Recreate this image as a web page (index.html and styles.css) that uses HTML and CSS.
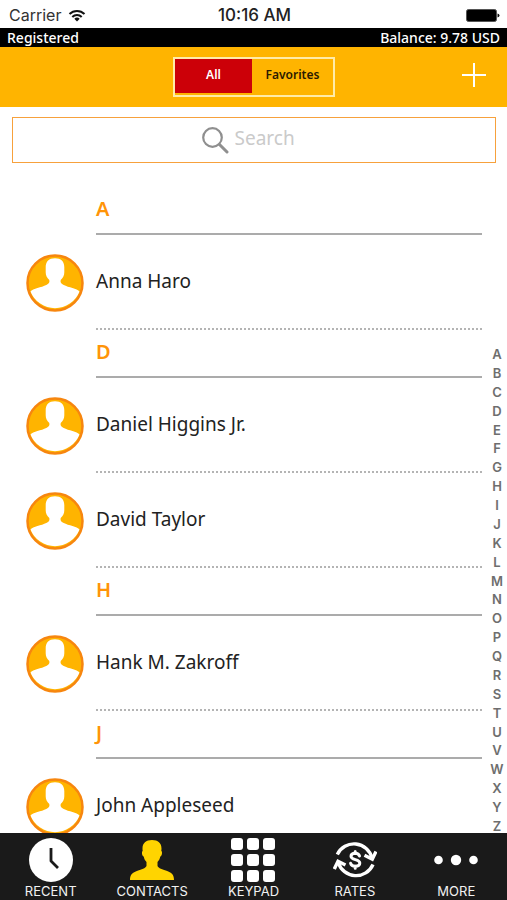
FILE: index.html
```html
<!DOCTYPE html>
<html lang="en">
<head>
<meta charset="utf-8">
<meta name="viewport" content="width=device-width, initial-scale=1">
<title>Contacts</title>
<link rel="stylesheet" href="styles.css">
</head>
<body>
<svg class="sprite" aria-hidden="true">
  <symbol id="avatar" viewBox="0 0 58 58">
    <circle cx="29" cy="29" r="28" fill="#ffb400"/>
    <path fill="#fff" d="M29 4.300c-6 0-9.300 3.200-9.300 9v5c0 3.500 1.200 5.500 3.600 7.700.6 2.500-.5 3.800-3 5C15.500 33.500 7 34.500 4.400 37.500A26.500 26.500 0 0 0 53.600 37.500C51 34.500 42.500 33.500 37.700 31c-2.500-1.200-3.600-2.500-3-5 2.400-2.200 3.600-4.200 3.600-7.700v-5c0-5.800-3.300-9-9.300-9z"/>
    <circle cx="29" cy="29" r="27.500" fill="none" stroke="#f7860f" stroke-width="2.500"/>
  </symbol>
</svg>

<div class="status">
  <span class="carrier">Carrier
    <svg class="wifi" viewBox="0 0 18 13" aria-hidden="true"><g fill="none" stroke="#111" stroke-width="2"><path d="M1.500 5a10.600 10.600 0 0 1 15 0"/><path d="M4.300 8a6.600 6.600 0 0 1 9.400 0"/></g><path fill="#111" d="M9 12.500l-2.700-2.700a3.800 3.800 0 0 1 5.400 0z"/></svg>
  </span>
  <span class="time">10:16 AM</span>
  <svg class="battery" viewBox="0 0 34 13" aria-hidden="true"><rect x=".5" y=".5" width="30" height="12" rx="2" fill="#000" stroke="#555"/><path d="M31.500 4.500q2 .5 2 2t-2 2z" fill="#111"/></svg>
</div>
<div class="account"><span>Registered</span><span>Balance: 9.78 USD</span></div>

<header class="toolbar">
  <div class="segments">
    <button class="segment active" type="button" aria-pressed="true">All</button>
    <button class="segment" type="button" aria-pressed="false">Favorites</button>
  </div>
  <button class="add" type="button" aria-label="Add contact">
    <svg viewBox="0 0 24 24" aria-hidden="true"><path d="M12 0v24M0 12h24" stroke="#fff" stroke-width="2"/></svg>
  </button>
</header>

<form class="search">
  <label for="query" aria-label="Search">
    <svg viewBox="0 0 27 27" aria-hidden="true"><g fill="none" stroke="#8f8f8f"><circle cx="10.500" cy="10.500" r="9.300" stroke-width="2.200"/><path d="M17.500 17.500l7.500 7.500" stroke-width="3" stroke-linecap="round"/></g></svg>
  </label>
  <input id="query" type="text" placeholder="Search">
</form>

<main class="contacts">
  <div class="list">
    <h2>A</h2>
    <div class="row"><svg class="avatar"><use href="#avatar"/></svg><span class="name">Anna Haro</span></div>
    <h2>D</h2>
    <div class="row"><svg class="avatar"><use href="#avatar"/></svg><span class="name">Daniel Higgins Jr.</span></div>
    <div class="row"><svg class="avatar"><use href="#avatar"/></svg><span class="name">David Taylor</span></div>
    <h2>H</h2>
    <div class="row"><svg class="avatar"><use href="#avatar"/></svg><span class="name">Hank M. Zakroff</span></div>
    <h2>J</h2>
    <div class="row"><svg class="avatar"><use href="#avatar"/></svg><span class="name">John Appleseed</span></div>
  </div>
  <div class="index">
    <span>A</span><span>B</span><span>C</span><span>D</span><span>E</span><span>F</span><span>G</span><span>H</span><span>I</span><span>J</span><span>K</span><span>L</span><span>M</span><span>N</span><span>O</span><span>P</span><span>Q</span><span>R</span><span>S</span><span>T</span><span>U</span><span>V</span><span>W</span><span>X</span><span>Y</span><span>Z</span>
  </div>
</main>

<nav class="tabs">
  <button class="tab" type="button">
    <svg viewBox="0 0 44 44" aria-hidden="true"><circle cx="22" cy="22" r="22" fill="#fff"/><path d="M22 10v13l7 7" fill="none" stroke="#1a1a1a" stroke-width="2.800" stroke-linejoin="round"/></svg>
    <span>RECENT</span>
  </button>
  <button class="tab" type="button">
    <svg viewBox="0 0 44 44" aria-hidden="true"><path fill="#ffd400" d="M22 2c-6 0-9.500 3-9.500 8.500 0 1.500.2 2.500.2 2.500-1.300.5-.8 5 1 5.500.6 2.500 1.300 4 2.800 5.500v4c-1 2.500-5 3.500-9 4.800C2.500 34.500 0 36.500 0 42h44c0-5.500-2.500-7.500-7.500-9.200-4-1.300-8-2.300-9-4.800v-4c1.500-1.500 2.200-3 2.800-5.500 1.800-.5 2.300-5 1-5.500 0 0 .2-1 .2-2.500C31.500 5 28 2 22 2z"/></svg>
    <span>CONTACTS</span>
  </button>
  <button class="tab" type="button">
    <svg viewBox="0 0 44 44" aria-hidden="true"><g fill="#fff"><rect width="12" height="12" rx="3"/><rect x="16" width="12" height="12" rx="3"/><rect x="32" width="12" height="12" rx="3"/><rect y="16" width="12" height="12" rx="3"/><rect x="16" y="16" width="12" height="12" rx="3"/><rect x="32" y="16" width="12" height="12" rx="3"/><rect y="32" width="12" height="12" rx="3"/><rect x="16" y="32" width="12" height="12" rx="3"/><rect x="32" y="32" width="12" height="12" rx="3"/></g></svg>
    <span>KEYPAD</span>
  </button>
  <button class="tab" type="button">
    <svg viewBox="0 0 44 44" aria-hidden="true"><g fill="none" stroke="#fff" stroke-width="3.400"><path d="M4.300 16.500A18.500 18.500 0 0 1 39 20"/><path d="M40 26.500A18.500 18.500 0 0 1 5.300 24.500"/><path d="M31.500 17.300l7.800 4 3.700-7.800"/><path d="M12.500 27L5 23.300 1.300 31"/><g stroke-linecap="round"><path d="M26.500 18c-.5-1.800-2.100-2.800-4.300-2.800-2.700 0-4.200 1.300-4.200 3.100 0 4.400 8.800 2.200 8.800 6.700 0 2-1.700 3.200-4.500 3.200-2.500 0-4.200-1-4.700-2.900M22.200 13.500v2M22.200 28v2.200" stroke-width="3"/></g></g></svg>
    <span>RATES</span>
  </button>
  <button class="tab" type="button">
    <svg viewBox="0 0 44 44" aria-hidden="true"><g fill="#fff"><circle cx="4.500" cy="22" r="4.300"/><circle cx="22" cy="22" r="5.200"/><circle cx="39.500" cy="22" r="4.300"/></g></svg>
    <span>MORE</span>
  </button>
</nav>
</body>
</html>
```
FILE: styles.css
```css
* { box-sizing: border-box; }

body {
  margin: 0;
  height: 100vh;
  display: flex;
  flex-direction: column;
  overflow: hidden;
  background: #fff;
  color: #222;
  font-family: "Noto Sans", "Open Sans", sans-serif;
}

button {
  margin: 0;
  padding: 0;
  border: 0;
  background: none;
  color: inherit;
  font: inherit;
}

.sprite { display: none; }

.status {
  flex: none;
  display: grid;
  grid-template-columns: 1fr auto 1fr;
  align-items: center;
  height: 28px;
  padding: 2px 7px 0 9px;
  font: 16px Inter, sans-serif;
}
.carrier { display: flex; align-items: center; gap: 7px; color: #333; }
.wifi { width: 18px; height: 13px; }
.time { font-size: 17px; font-weight: 500; }
.battery { width: 34px; height: 13px; justify-self: end; }

.account {
  flex: none;
  display: flex;
  justify-content: space-between;
  padding: 0 7px;
  background: #000;
  color: #fff;
  font-size: 14px;
  font-weight: 500;
  line-height: 19px;
}

.toolbar {
  flex: none;
  display: grid;
  grid-template-columns: 1fr 162px 1fr;
  align-items: center;
  height: 60px;
  padding: 0 21px 0 22px;
  background: #ffb400;
}
.segments {
  grid-column: 2;
  display: flex;
  height: 40px;
  padding-bottom: 2px;
  border: 2px solid #ffeba8;
}
.segment { flex: 1; padding-bottom: 4px; font-size: 12px; font-weight: 600; color: #2b1a00; }
.segment.active { flex: none; width: 77px; background: #cc0008; color: #fff; }
.add { justify-self: end; width: 24px; padding-bottom: 4px; }
.add svg { display: block; width: 24px; height: 24px; }

.search {
  flex: none;
  display: flex;
  align-items: center;
  justify-content: center;
  gap: 6px;
  height: 46px;
  margin: 10px 11px 0 12px;
  border: 1px solid #f7a13c;
}
.search svg { display: block; width: 27px; height: 27px; }
.search input {
  width: 72px;
  padding: 0 0 4px;
  border: 0;
  outline: 0;
  background: none;
  font: 19px "Noto Sans", sans-serif;
}
.search input::placeholder { color: #cacaca; opacity: 1; }

.contacts { flex: 1; min-height: 0; display: flex; overflow: hidden; }
.list { flex: 1; padding: 24px 0 0 26px; }
.list h2 {
  height: 48px;
  margin: 0 0 0 70px;
  border-bottom: 2px solid #ababab;
  color: #ff9408;
  font-size: 20px;
  font-weight: 600;
  line-height: 44px;
}
.row { display: flex; height: 95px; }
.avatar { flex: none; width: 58px; height: 58px; margin: 19px 12px 0 0; }
.name {
  flex: 1;
  border-bottom: 2px dotted #b4b4b4;
  font-size: 19px;
  line-height: 93px;
}

.index {
  flex: none;
  display: flex;
  flex-direction: column;
  justify-content: space-between;
  width: 25px;
  padding: 184px 0 0 5px;
  color: #6e6e6e;
  font: 600 13px/14px Inter, sans-serif;
  text-align: center;
}

.tabs {
  flex: none;
  display: grid;
  grid-template-columns: repeat(5, 1fr);
  height: 67px;
  background: #1a1a1a;
  color: #f2f2f2;
}
.tab {
  display: flex;
  flex-direction: column;
  align-items: center;
  padding-top: 5px;
  font: 13px/18px Inter, sans-serif;
}
.tab svg { flex: none; width: 44px; height: 44px; }
```
